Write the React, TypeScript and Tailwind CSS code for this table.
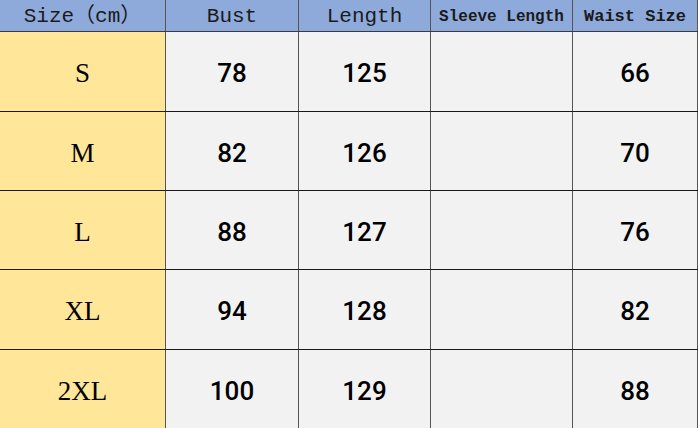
const header = [
  { label: 'Size（cm）', cls: 'text-[21px]' },
  { label: 'Bust', cls: 'text-[21px]' },
  { label: 'Length', cls: 'text-[21px]' },
  { label: 'Sleeve Length', cls: 'text-[16px] font-bold' },
  { label: 'Waist Size', cls: 'text-[17px] font-bold' },
]

const rows = [
  { size: 'S', bust: '78', length: '125', sleeve: '', waist: '66', h: 'h-[80px]' },
  { size: 'M', bust: '82', length: '126', sleeve: '', waist: '70', h: 'h-[79px]' },
  { size: 'L', bust: '88', length: '127', sleeve: '', waist: '76', h: 'h-[79px]' },
  { size: 'XL', bust: '94', length: '128', sleeve: '', waist: '82', h: 'h-[80px]' },
  { size: '2XL', bust: '100', length: '129', sleeve: '', waist: '88', h: 'h-[80px]' },
]

const widths = ['w-[166px]', 'w-[133px]', 'w-[132px]', 'w-[142px]', 'w-[125px]']

export default function App() {
  return (
    <div className="w-[698px] h-[428px] overflow-hidden bg-white">
      {/* header row */}
      <div className="flex h-[32px] bg-[#8eaadb] border-b border-[#3a3a3a]">
        {header.map((c, i) => (
          <div
            key={c.label}
            className={`${widths[i]} ${c.cls} flex items-center justify-center pt-[2px] border-r border-[#555] text-[#1a1a1a] font-['Liberation_Mono','Noto_Sans_CJK_SC',monospace] whitespace-nowrap`}
          >
            {c.label}
          </div>
        ))}
      </div>

      {rows.map(r => (
        <div key={r.size} className={`flex ${r.h} border-b border-[#1a1a1a]`}>
          <div className="w-[166px] bg-[#ffe699] flex items-center justify-center pt-[4px] border-r border-[#555] text-[27px] text-black font-['Liberation_Serif',serif]">
            {r.size}
          </div>
          {[r.bust, r.length, r.sleeve, r.waist].map((v, i) => (
            <div
              key={i}
              className={`${widths[i + 1]} bg-[#f2f2f2] flex items-center justify-center pt-[4px] border-r border-[#555] text-[26px] font-medium text-black font-['Roboto','Liberation_Sans',sans-serif]`}
            >
              {v}
            </div>
          ))}
        </div>
      ))}
    </div>
  )
}
